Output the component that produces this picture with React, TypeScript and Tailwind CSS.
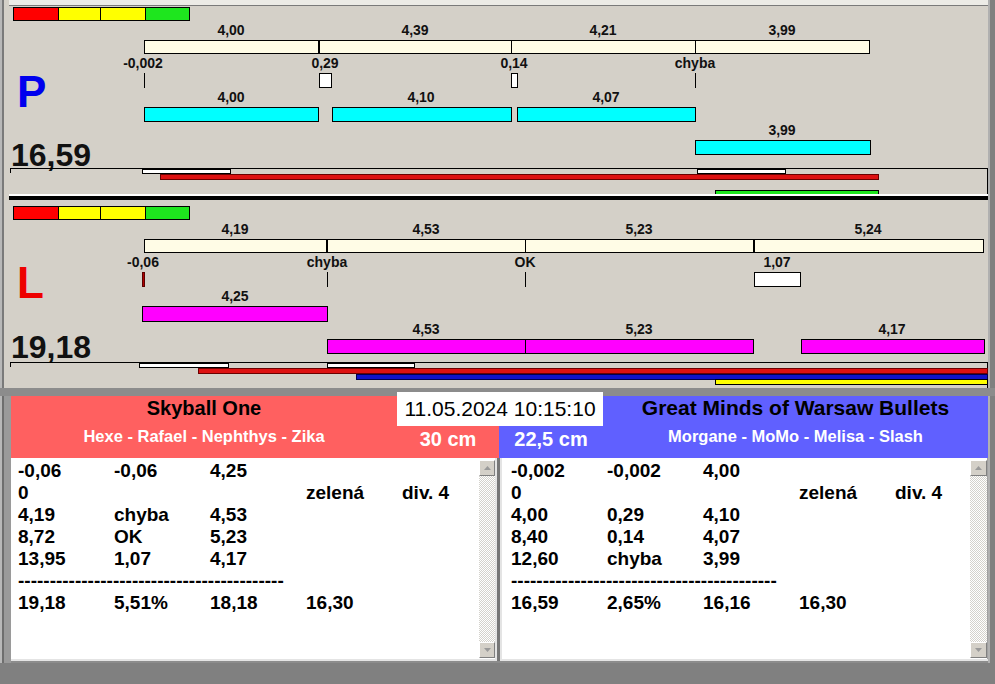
import React from "react";

const SVG_FONT = "'Liberation Sans', Arial, sans-serif";

type Seg = [number, number, string];

const LEGEND: Seg[] = [
  [13, 58, "#ff0000"],
  [58, 100, "#ffff00"],
  [100, 145, "#ffff00"],
  [145, 189, "#1ee61e"],
];

// box drawn with its outer edges on x1..x2 / y1..y2
function Box({
  x1,
  x2,
  y1,
  y2,
  fill,
  stroke = "#000",
}: {
  x1: number;
  x2: number;
  y1: number;
  y2: number;
  fill: string;
  stroke?: string;
}) {
  return (
    <rect
      x={x1 + 0.5}
      y={y1 + 0.5}
      width={x2 - x1 - 1}
      height={y2 - y1 - 1}
      fill={fill}
      stroke={stroke}
    />
  );
}

function VLine({ x, y1, y2, w = 1 }: { x: number; y1: number; y2: number; w?: number }) {
  return <rect x={x} y={y1} width={w} height={y2 - y1} fill="#000" />;
}

function Legend({ y }: { y: number }) {
  return (
    <g>
      {LEGEND.map(([a, b, c]) => (
        <rect key={a} x={a + 0.5} y={y + 0.5} width={b - a} height={13} fill={c} stroke="#000" />
      ))}
    </g>
  );
}

function Labels({ y, items }: { y: number; items: [number, string][] }) {
  return (
    <g>
      {items.map(([x, t]) => (
        <text key={x + t} x={x} y={y} textAnchor="middle">
          {t}
        </text>
      ))}
    </g>
  );
}

function TimelineP() {
  return (
    <svg width={979} height={188} viewBox="9 6 979 188" className="block">
      <g fontFamily={SVG_FONT} fontWeight="bold" fontSize={14} fill="#111">
        <Legend y={7} />
        <Labels y={35} items={[[231, "4,00"], [415, "4,39"], [603, "4,21"], [782, "3,99"]]} />
        <Box x1={144} x2={870} y1={40} y2={54} fill="#fffce6" />
        <VLine x={318} y1={40} y2={54} w={2} />
        <VLine x={511} y1={40} y2={54} />
        <VLine x={695} y1={40} y2={54} />

        <Labels y={68} items={[[143, "-0,002"], [325, "0,29"], [514, "0,14"], [695, "chyba"]]} />
        <VLine x={144} y1={73} y2={88} />
        <Box x1={319} x2={332} y1={73} y2={88} fill="#fff" />
        <Box x1={511} x2={518} y1={73} y2={88} fill="#fff" />
        <VLine x={695} y1={73} y2={88} />

        <Labels y={102} items={[[231, "4,00"], [421, "4,10"], [606, "4,07"]]} />
        <Box x1={144} x2={319} y1={107} y2={122} fill="#00ffff" />
        <Box x1={332} x2={512} y1={107} y2={122} fill="#00ffff" />
        <Box x1={517} x2={696} y1={107} y2={122} fill="#00ffff" />

        <Labels y={135} items={[[782, "3,99"]]} />
        <Box x1={695} x2={871} y1={140} y2={155} fill="#00ffff" />

        <text x={17} y={107} fontSize={44} fill="#0000ee">
          P
        </text>
        <text x={11} y={166} fontSize={32} fill="#111">
          16,59
        </text>

        <rect x={10} y={168} width={978} height={1} fill="#000" />
        <VLine x={10} y1={168} y2={173} />
        <VLine x={987} y1={168} y2={196} />
        <Box x1={142} x2={231} y1={169} y2={174} fill="#fff" />
        <Box x1={697} x2={786} y1={169} y2={174} fill="#fff" />
        <Box x1={160} x2={879} y1={174} y2={180} fill="#dd1111" stroke="#6a0000" />
        <Box x1={715} x2={879} y1={190} y2={197} fill="#1ee61e" />
      </g>
    </svg>
  );
}

function TimelineL() {
  return (
    <svg width={979} height={188} viewBox="9 200 979 188" className="block">
      <g fontFamily={SVG_FONT} fontWeight="bold" fontSize={14} fill="#111">
        <Legend y={206} />
        <Labels y={234} items={[[235, "4,19"], [426, "4,53"], [639, "5,23"], [868, "5,24"]]} />
        <Box x1={144} x2={984} y1={239} y2={253} fill="#fffce6" />
        <VLine x={326} y1={239} y2={253} w={2} />
        <VLine x={525} y1={239} y2={253} />
        <VLine x={753} y1={239} y2={253} w={2} />

        <Labels y={267} items={[[143, "-0,06"], [327, "chyba"], [525, "OK"], [777, "1,07"]]} />
        <Box x1={142} x2={145} y1={272} y2={287} fill="#b00000" stroke="#5a0000" />
        <VLine x={327} y1={272} y2={287} />
        <VLine x={525} y1={272} y2={287} />
        <Box x1={754} x2={801} y1={272} y2={287} fill="#fff" />

        <Labels y={301} items={[[235, "4,25"]]} />
        <Box x1={142} x2={328} y1={306} y2={322} fill="#ff00ff" />

        <Labels y={334} items={[[426, "4,53"], [639, "5,23"], [892, "4,17"]]} />
        <Box x1={327} x2={754} y1={339} y2={354} fill="#ff00ff" />
        <VLine x={525} y1={339} y2={354} />
        <Box x1={801} x2={985} y1={339} y2={354} fill="#ff00ff" />

        <text x={17} y={298} fontSize={44} fill="#ee0000">
          L
        </text>
        <text x={11} y={358} fontSize={32} fill="#111">
          19,18
        </text>

        <rect x={10} y={362} width={978} height={1} fill="#000" />
        <VLine x={10} y1={362} y2={367} />
        <VLine x={987} y1={362} y2={382} />
        <VLine x={987} y1={385} y2={388} />
        <Box x1={139} x2={229} y1={363} y2={368} fill="#fff" />
        <Box x1={327} x2={415} y1={363} y2={368} fill="#fff" />
        <Box x1={198} x2={988} y1={368} y2={374} fill="#dd1111" stroke="#6a0000" />
        <Box x1={356} x2={988} y1={374} y2={380} fill="#1212c8" stroke="#000050" />
        <Box x1={715} x2={988} y1={379} y2={385} fill="#ffff00" />
      </g>
    </svg>
  );
}

type Row = string[];

const LEFT_ROWS: Row[] = [
  ["-0,06", "-0,06", "4,25", "", ""],
  ["0", "", "", "zelená", "div. 4"],
  ["4,19", "chyba", "4,53", "", ""],
  ["8,72", "OK", "5,23", "", ""],
  ["13,95", "1,07", "4,17", "", ""],
];
const LEFT_TOTAL: Row = ["19,18", "5,51%", "18,18", "16,30", ""];

const RIGHT_ROWS: Row[] = [
  ["-0,002", "-0,002", "4,00", "", ""],
  ["0", "", "", "zelená", "div. 4"],
  ["4,00", "0,29", "4,10", "", ""],
  ["8,40", "0,14", "4,07", "", ""],
  ["12,60", "chyba", "3,99", "", ""],
];
const RIGHT_TOTAL: Row = ["16,59", "2,65%", "16,16", "16,30", ""];

const DASHES = "-".repeat(42);

function ScrollArrow({ up }: { up?: boolean }) {
  return (
    <div className="h-[16px] shrink-0 bg-[#d4d0c8] border border-t-white border-l-white border-r-[#808080] border-b-[#808080] flex items-center justify-center">
      <svg width="7" height="4" viewBox="0 0 7 4">
        <path d={up ? "M0 4 L3.5 0 L7 4 Z" : "M0 0 L3.5 4 L7 0 Z"} fill="#9a9a9a" />
      </svg>
    </div>
  );
}

function ScrollBar({ width }: { width: string }) {
  return (
    <div className={`${width} shrink-0 flex flex-col pt-[2px] pb-[1px]`}>
      <ScrollArrow up />
      <div className="flex-1 bg-[#e6e4de] bg-[repeating-conic-gradient(#ffffff_0%_25%,#d4d2cc_0%_50%)] bg-[length:2px_2px]" />
      <ScrollArrow />
    </div>
  );
}

function ResultList({ rows, total, pad }: { rows: Row[]; total: Row; pad: string }) {
  const grid = "grid grid-cols-[96px_96px_96px_96px_96px]";
  return (
    <div
      className={`flex-1 min-w-0 overflow-hidden whitespace-nowrap ${pad} pt-[2px] text-[19px] font-bold leading-[22px] text-black`}
    >
      {rows.map((r, i) => (
        <div key={i} className={grid}>
          {r.map((c, j) => (
            <span key={j}>{c}</span>
          ))}
        </div>
      ))}
      <div>{DASHES}</div>
      <div className={grid}>
        {total.map((c, j) => (
          <span key={j}>{c}</span>
        ))}
      </div>
    </div>
  );
}

export default function App() {
  return (
    <div className="w-[995px] h-[684px] overflow-hidden flex flex-col bg-[#808080] font-['Liberation_Sans',Arial,sans-serif]">
      {/* Timelines */}
      <div className="flex h-[388px]">
        <div className="w-[9px] flex">
          <div className="w-[2px] bg-[#b8b8b8]" />
          <div className="w-[2px] bg-[#7a7a7a]" />
          <div className="flex-1 bg-[#d4d0c8]" />
        </div>
        <div className="w-[979px] flex flex-col bg-[#d4d0c8]">
          <div className="h-[6px] bg-[#ecebe6] border-b border-[#7a7a7a]" />
          <TimelineP />
          <div className="h-[2px] bg-white" />
          <div className="h-[4px] bg-black" />
          <TimelineL />
        </div>
        <div className="w-[7px] flex">
          <div className="w-[2px] bg-[#b0b0b0]" />
          <div className="flex-1 bg-[#808080]" />
        </div>
      </div>

      {/* Teams and results */}
      <div className="relative h-[275px] flex bg-[#8c8c8c] pt-[8px]">
        <div className="w-[11px] flex">
          <div className="w-[2px] bg-[#b8b8b8]" />
          <div className="w-[2px] bg-[#6e6e6e]" />
          <div className="flex-1 bg-[#9a9a9a]" />
        </div>

        <div className="w-[977px] flex flex-col">
          <div className="h-[62px] flex">
            <div className="w-[488px] bg-[#ff6060] flex">
              <div className="w-[386px] flex flex-col items-center">
                <div className="h-[24px] leading-[24px] text-[20px] font-bold text-black">Skyball One</div>
                <div className="mt-[6px] leading-[20px] text-[16.5px] font-bold text-white">
                  Hexe - Rafael - Nephthys - Zika
                </div>
              </div>
              <div className="flex-1 flex justify-center pt-[31px] leading-[24px] text-[20px] font-bold text-white">
                30 cm
              </div>
            </div>
            <div className="w-[489px] bg-[#6060ff] flex">
              <div className="w-[104px] flex justify-center pt-[31px] leading-[24px] text-[20px] font-bold text-white">
                22,5 cm
              </div>
              <div className="flex-1 flex flex-col items-center">
                <div className="h-[24px] leading-[24px] text-[21px] font-bold text-black">
                  Great Minds of Warsaw Bullets
                </div>
                <div className="mt-[6px] leading-[20px] text-[16.5px] font-bold text-white">
                  Morgane - MoMo - Melisa - Slash
                </div>
              </div>
            </div>
          </div>

          <div className="h-[205px] flex items-start">
            <div className="w-[486px] h-[203px] flex bg-white border-r-2 border-b-2 border-[#e4e4e4]">
              <ResultList rows={LEFT_ROWS} total={LEFT_TOTAL} pad="pl-[7px]" />
              <ScrollBar width="w-[16px]" />
            </div>
            <div className="w-[3px] h-[203px] bg-[#777777]" />
            <div className="w-[488px] h-[203px] flex bg-white border-l-2 border-b-2 border-[#e4e4e4]">
              <ResultList rows={RIGHT_ROWS} total={RIGHT_TOTAL} pad="pl-[9px]" />
              <ScrollBar width="w-[17px]" />
              <div className="w-[1px] shrink-0 bg-[#a0a0a0]" />
            </div>
          </div>
        </div>

        <div className="w-[7px] flex">
          <div className="w-[2px] bg-[#b0b0b0]" />
          <div className="flex-1 bg-[#808080]" />
        </div>

        {/* date stamp sits over both team headers */}
        <div className="absolute left-[397px] top-[4px] w-[206px] h-[34px] bg-white flex items-center justify-center text-[21px] text-black">
          11.05.2024 10:15:10
        </div>
      </div>

      <div className="h-[21px] bg-[#808080]" />
    </div>
  );
}
